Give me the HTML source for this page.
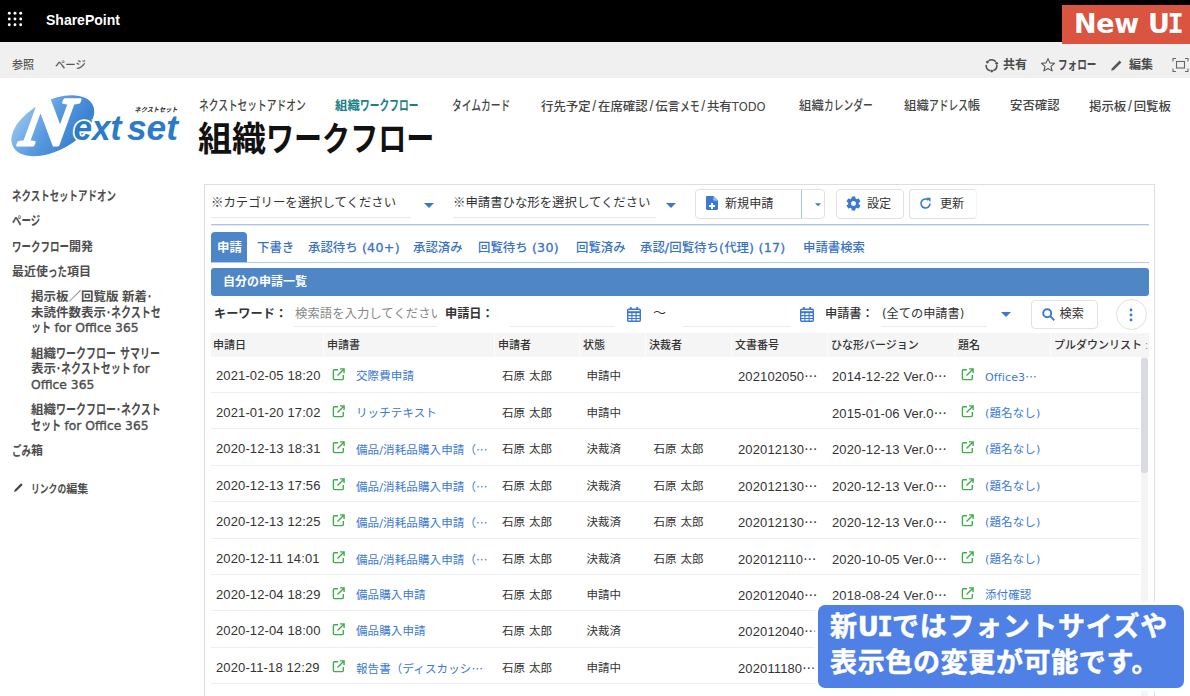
<!DOCTYPE html>
<html lang="ja">
<head>
<meta charset="utf-8">
<title>組織ワークフロー</title>
<style>
*{box-sizing:border-box;margin:0;padding:0}
html,body{width:1190px;height:696px;overflow:hidden;background:#fff}
body{position:relative;font-family:"Liberation Sans","Noto Sans CJK JP",sans-serif;color:#333;font-size:12px}
.abs{position:absolute;white-space:nowrap}
.k{display:inline-block;transform:scale(.8,1.08);transform-origin:0 55%}
.nav .k{transform:scale(.785,1.08)}
.k2{transform:scale(.79,1.08)}
#title .k{transform:scale(.825,1.0)}
#topbar{position:absolute;left:0;top:0;width:1190px;height:42px;background:#000}
#ribbon{position:absolute;left:0;top:42px;width:1190px;height:36px;background:#f0f0f0}
#badge{position:absolute;left:1062px;top:5px;width:128px;height:39px;background:#db5440;z-index:5}
#badge span{position:absolute;left:12px;top:2.5px;letter-spacing:-.3px;font-family:"DejaVu Sans","Liberation Sans",sans-serif;font-weight:bold;font-size:27px;line-height:32px;color:#fff;white-space:nowrap}
#panel{position:absolute;left:204px;top:184px;width:951px;height:530px;border:1px solid #dedede;background:#fff}
.rb{position:absolute;top:17px;font-size:12px;line-height:12px;color:#4a4a4a;font-weight:700;white-space:nowrap}
.si{font-style:normal;font-family:"DejaVu Sans Mono","Liberation Mono",monospace;margin:0 -.06em 0 -.08em}
.sl{display:inline-block;width:7.5px;text-align:center;font-size:14px;line-height:12px}
.nav{position:absolute;top:100px;font-size:12.4px;line-height:12px;color:#444;white-space:nowrap;font-weight:500}
.ln{position:absolute;left:12px;margin-top:1px;font-size:12.5px;line-height:12px;color:#4d4d4d;white-space:nowrap;font-weight:700}
.vd{font-family:"DejaVu Sans","Liberation Sans",sans-serif;font-size:11.5px}
.ln .vd{font-size:12.3px;font-weight:400;-webkit-text-stroke:.35px #4d4d4d}
.hl{position:absolute;height:1px}
.btn{position:absolute;border:1px solid #e2e2e2;border-radius:4px;background:#fff}
.p{position:absolute;white-space:nowrap;line-height:14px;font-size:12.4px;color:#333}
.b{font-weight:700}
.tab{position:absolute;top:241px;font-size:12.4px;line-height:14px;color:#3873c6;white-space:nowrap;font-weight:500}
.th{position:absolute;top:338px;font-size:11px;line-height:14px;color:#333;white-space:nowrap;font-weight:500}
.tab .wl{-webkit-text-stroke:.3px #3873c6;font-size:1.02em;letter-spacing:.3px}
.row{position:absolute;left:211px;width:929px;height:36px;border-bottom:1px solid #eeeeee}
.c{position:absolute;top:13px;line-height:14px;white-space:nowrap;font-size:13px;color:#333;letter-spacing:.12px}
.j{font-size:11.5px;top:13px;word-spacing:.8px;letter-spacing:0}
.lk{color:#3a78d4;font-size:11.5px;top:13px}
.ic{position:absolute;top:12px}
.el{font-family:"Noto Sans CJK JP","Liberation Sans",sans-serif}
.wl{font-family:"DejaVu Sans","Liberation Sans",sans-serif;font-size:.96em}
</style>
</head>
<body>
<div id="topbar">
<svg class="abs" style="left:7px;top:11px" width="16" height="16" viewBox="0 0 16 16" fill="#fff">
<circle cx="2.3" cy="2.3" r="1.450"/><circle cx="8" cy="2.3" r="1.450"/><circle cx="13.7" cy="2.3" r="1.450"/><circle cx="2.3" cy="8" r="1.450"/><circle cx="8" cy="8" r="1.450"/><circle cx="13.7" cy="8" r="1.450"/><circle cx="2.3" cy="13.7" r="1.450"/><circle cx="8" cy="13.7" r="1.450"/><circle cx="13.7" cy="13.7" r="1.450"/>
</svg>
<div class="abs" style="left:46px;top:12px;font-size:14px;line-height:16px;font-weight:bold;color:#fff">SharePoint</div>
</div>
<div id="badge"><span>New U<i class="si">I</i></span></div>
<div id="ribbon">
<div class="abs" style="left:12px;top:17px;font-size:11px;line-height:12px;color:#555;font-weight:500">参照</div>
<div class="abs" style="left:55px;top:17px;font-size:11px;line-height:12px;color:#555;font-weight:500"><span style="display:inline-block;transform:scaleX(.94);transform-origin:0 50%">ページ</span></div>
<svg class="abs" style="left:984px;top:16px" width="15" height="15" viewBox="0 0 14 14" fill="none" stroke="#555" stroke-width="1.500"><path d="M4.2 2.6A5 5 0 0 1 11 3.6M12 6.5a5 5 0 0 1-3.3 5.2M5.6 11.8A5 5 0 0 1 2.1 6.4"/><circle cx="3.2" cy="3.8" r="1.350" fill="#555" stroke="none"/><circle cx="11.8" cy="5" r="1.350" fill="#555" stroke="none"/><circle cx="7.2" cy="12.2" r="1.350" fill="#555" stroke="none"/></svg>
<div class="rb" style="left:1003px">共有</div>
<svg class="abs" style="left:1040px;top:15px" width="16" height="16" viewBox="0 0 16 16" fill="none" stroke="#555" stroke-width="1.1" stroke-linejoin="round"><path d="M8 1.6l1.9 4.3 4.6.4-3.5 3 1.1 4.6L8 11.5l-4.1 2.4L5 9.3l-3.5-3 4.6-.4z"/></svg>
<div class="rb" style="left:1058px"><span class="k" style="margin-right:-13.0px">フォロー</span></div>
<svg class="abs" style="left:1110px;top:17px" width="13" height="13" viewBox="0 0 13 13"><path d="M1.2 11.8l.8-2.6L9.6 1.6l1.8 1.8L3.8 11z" fill="#555"/></svg>
<div class="rb" style="left:1129px">編集</div>
<svg class="abs" style="left:1172px;top:15px" width="18" height="16" viewBox="0 0 18 16" fill="none" stroke="#666" stroke-width="1.1"><path d="M1 4.5V1.5H4M13 1.5h3v3M16 11.5v3h-3M4 14.5H1v-3"/><rect x="4.5" y="4.5" width="8" height="6.5"/></svg>
</div>
<svg class="abs" style="left:8px;top:90px" width="180" height="72" viewBox="0 0 180 72">
<defs><linearGradient id="lg" x1="0" y1="0" x2="1" y2="1"><stop offset="0" stop-color="#a6d0f5"/><stop offset=".45" stop-color="#5a9be0"/><stop offset=".8" stop-color="#3b80d0"/><stop offset="1" stop-color="#5d9fe2"/></linearGradient></defs>
<ellipse cx="44.800" cy="35.700" rx="45" ry="25" transform="rotate(-28 44.800 35.700)" fill="url(#lg)"/>
<text transform="translate(8.500 55) skewX(-20)" font-family="Liberation Serif,serif" font-weight="bold" font-size="69" fill="#fff" stroke="#fff" stroke-width="3" stroke-linejoin="round" textLength="48" lengthAdjust="spacingAndGlyphs">N</text>
<text x="65.500" y="50.300" font-family="Liberation Sans,sans-serif" font-style="italic" font-weight="bold" font-size="34.500" fill="#2b7bc8" stroke="#fff" stroke-width="3.500" paint-order="stroke" textLength="48" lengthAdjust="spacingAndGlyphs">ext</text>
<text x="119" y="50.300" font-family="Liberation Sans,sans-serif" font-style="italic" font-weight="bold" font-size="34.500" fill="#2b7bc8" textLength="51" lengthAdjust="spacingAndGlyphs">set</text>
<text x="126.500" y="21.500" font-family="Liberation Sans,'Noto Sans CJK JP',sans-serif" font-style="italic" font-weight="bold" font-size="6.500" fill="#222" textLength="43" lengthAdjust="spacingAndGlyphs">ネクストセット</text>
</svg>
<div class="nav" style="left:199px;"><span class="k" style="margin-right:-29.3px">ネクストセットアドオン</span></div>
<div class="nav" style="left:335px;color:#1a7f86;font-weight:700">組織<span class="k" style="margin-right:-16.0px">ワークフロー</span></div>
<div class="nav" style="left:452px;"><span class="k" style="margin-right:-16.0px">タイムカード</span></div>
<div class="nav" style="left:541px;">行先予定<span class="sl">/</span>在席確認<span class="sl">/</span>伝言<span class="k" style="margin-right:-5.3px">メモ</span><span class="sl">/</span>共有<span class="vd" style="font-size:11.5px">TODO</span></div>
<div class="nav" style="left:799px;">組織<span class="k" style="margin-right:-13.3px">カレンダー</span></div>
<div class="nav" style="left:904px;">組織<span class="k" style="margin-right:-10.7px">アドレス</span>帳</div>
<div class="nav" style="left:1010px;">安否確認</div>
<div class="nav" style="left:1089px;">掲示板<span class="sl">/</span>回覧板</div>
<div class="abs" id="title" style="left:198px;top:118px;font-size:34px;line-height:42px;color:#111;font-weight:700">組織<span class="k" style="margin-right:-35.7px">ワークフロー</span></div>
<div class="ln" style="left:12px;top:189px;font-size:12px"><span class="k k2" style="margin-right:-27.7px">ネクストセットアドオン</span></div>
<div class="ln" style="left:12px;top:214px;font-size:12px"><span class="k k2" style="margin-right:-7.6px">ページ</span></div>
<div class="ln" style="left:12px;top:240px;font-size:12px"><span class="k k2" style="margin-right:-15.1px">ワークフロー</span>開発</div>
<div class="ln" style="left:12px;top:265px;font-size:12px">最近使<span class="k k2" style="margin-right:-5.0px">った</span>項目</div>
<div class="ln" style="left:31px;top:290px">掲示板／回覧版 新着<span class="k" style="margin-right:-2.5px">･</span></div>
<div class="ln" style="left:31px;top:306px">未読件数表示<span class="k" style="margin-right:-15.0px">･ネクストセ</span></div>
<div class="ln" style="left:31px;top:321px"><span class="k" style="margin-right:-5.0px">ット</span> <span class="vd">for Office 365</span></div>
<div class="ln" style="left:31px;top:347px">組織<span class="k" style="margin-right:-15.0px">ワークフロー</span> <span class="k" style="margin-right:-10.0px">サマリー</span></div>
<div class="ln" style="left:31px;top:362px">表示<span class="k" style="margin-right:-20.0px">･ネクストセット</span> <span class="vd">for</span></div>
<div class="ln" style="left:31px;top:378px"><span class="vd">Office 365</span></div>
<div class="ln" style="left:31px;top:403px">組織<span class="k" style="margin-right:-27.5px">ワークフロー･ネクスト</span></div>
<div class="ln" style="left:31px;top:419px"><span class="k" style="margin-right:-7.5px">セット</span> <span class="vd">for Office 365</span></div>
<div class="ln" style="left:12px;top:444px;font-size:12px"><span class="k k2" style="margin-right:-5.0px">ごみ</span>箱</div>
<svg class="abs" style="left:13px;top:482px" width="11" height="11" viewBox="0 0 13 13"><path d="M1.2 11.8l.8-2.6L9.6 1.6l1.8 1.8L3.8 11z" fill="#444"/></svg>
<div class="ln" style="left:31px;top:482px;font-size:11px"><span class="k" style="margin-right:-8.8px">リンクの</span>編集</div>
<div id="panel"></div>
<div class="p" style="left:211px;top:196px">※カテゴリーを選択してください</div>
<div class="hl" style="left:211px;top:217px;width:200px;background:#ebebeb"></div>
<svg class="abs" style="left:424px;top:203px" width="10" height="5" viewBox="0 0 10 5"><path d="M0 0h10L5 5z" fill="#3a78d4"/></svg>
<div class="p" style="left:453px;top:196px">※申請書ひな形を選択してください</div>
<div class="hl" style="left:453px;top:217px;width:203px;background:#ebebeb"></div>
<svg class="abs" style="left:666px;top:203px" width="10" height="5" viewBox="0 0 10 5"><path d="M0 0h10L5 5z" fill="#3a78d4"/></svg>
<div class="btn" style="left:695px;top:189px;width:130px;height:30px"></div>
<div class="abs" style="left:801px;top:190px;width:1px;height:28px;background:#a9c4e8"></div>
<svg class="abs" style="left:706px;top:196px" width="12" height="14" viewBox="0 0 12 14"><path d="M1.2 0h6.3L12 4.5v8.3c0 .7-.5 1.2-1.2 1.2H1.2C.5 14 0 13.500 0 12.800V1.200C0 .5.5 0 1.200 0z" fill="#3a78d4"/><path d="M7.300 0v3.700c0 .6.400 1 1 1H12z" fill="#9dbdec"/><path d="M5 7h2v2h2v2H7v2H5v-2H3V9h2z" fill="#fff"/></svg>
<div class="p" style="left:725px;top:197px;font-size:12.1px">新規申請</div>
<svg class="abs" style="left:814.5px;top:203px" width="6" height="3.5" viewBox="0 0 10 5"><path d="M0 0h10L5 5z" fill="#3a78d4"/></svg>
<div class="btn" style="left:836px;top:189px;width:68px;height:30px"></div>
<svg class="abs" style="left:844.5px;top:194.500px" width="17" height="17" viewBox="0 0 24 24"><path fill="#3a78d4" d="M19.430 12.980c.040-.320.070-.640.070-.980s-.030-.660-.070-.980l2.110-1.650c.190-.150.240-.420.120-.640l-2-3.460c-.120-.220-.390-.300-.610-.220l-2.490 1c-.520-.400-1.080-.730-1.690-.980l-.380-2.650C14.460 2.180 14.250 2 14 2h-4c-.250 0-.460.180-.490.420l-.380 2.650c-.610.250-1.170.590-1.690.980l-2.490-1c-.230-.090-.490 0-.610.220l-2 3.460c-.130.220-.070.490.120.640l2.110 1.650c-.040.320-.070.650-.070.980s.030.660.070.980l-2.110 1.650c-.190.150-.240.420-.120.640l2 3.460c.120.220.390.300.610.220l2.490-1c.520.400 1.080.730 1.690.980l.380 2.650c.030.240.240.420.490.420h4c.250 0 .460-.180.490-.420l.380-2.650c.610-.250 1.170-.590 1.690-.980l2.490 1c.230.090.490 0 .610-.220l2-3.460c.120-.220.070-.490-.120-.640l-2.110-1.650zM12 15.500c-1.930 0-3.500-1.570-3.500-3.500s1.570-3.500 3.500-3.500 3.500 1.570 3.500 3.500-1.570 3.500-3.500 3.500z"/></svg>
<div class="p" style="left:867px;top:197px;font-size:12.1px">設定</div>
<div class="btn" style="left:909px;top:189px;width:68px;height:30px;border-right-color:#f4f4f4"></div>
<svg class="abs" style="left:919px;top:197px" width="13" height="13" viewBox="0 0 13 13" fill="none" stroke="#3a78d4" stroke-width="1.600"><path d="M11 6.500A4.500 4.500 0 1 1 9.400 3.050"/><path d="M7.300 .8h4.200v4.200z" fill="#3a78d4" stroke="none"/></svg>
<div class="p" style="left:940px;top:197px;font-size:12.1px">更新</div>
<div class="hl" style="left:211px;top:224px;width:938px;background:#a9c5eb"></div>
<div class="hl" style="left:211px;top:225px;width:938px;background:#dfe9f8"></div>
<div class="abs" style="left:211px;top:232px;width:36px;height:31px;background:#4d86c8;border-radius:4px 4px 0 0"></div>
<div class="tab" style="left:217px;color:#fff;font-weight:700">申請</div>
<div class="tab" style="left:257px">下書き</div>
<div class="tab" style="left:308px">承認待ち<span class="wl"> (40+)</span></div>
<div class="tab" style="left:413px">承認済み</div>
<div class="tab" style="left:478px">回覧待ち<span class="wl"> (30)</span></div>
<div class="tab" style="left:576px">回覧済み</div>
<div class="tab" style="left:640px">承認<span class="wl">/</span>回覧待ち<span class="wl">(</span>代理<span class="wl">) (17)</span></div>
<div class="tab" style="left:803px">申請書検索</div>
<div class="hl" style="left:211px;top:262px;width:938px;background:#b3cbee"></div>
<div class="abs" style="left:211px;top:268px;width:938px;height:28px;background:#4f86c6;border-radius:3px"></div>
<div class="p b" style="left:223px;top:275px;color:#fff;font-size:12px">自分の申請一覧</div>
<div class="p b" style="left:214px;top:307px;font-size:12.2px">キーワード：</div>
<div class="p" style="left:295px;top:307px;color:#888;width:142px;overflow:hidden">検索語を入力してください</div>
<div class="hl" style="left:294px;top:326px;width:143px;background:#ececec"></div>
<div class="p b" style="left:445px;top:307px;font-size:12.2px">申請日：</div>
<div class="hl" style="left:510px;top:326px;width:105px;background:#ececec"></div>
<svg class="abs" style="left:627px;top:307px" width="14" height="15" viewBox="0 0 14 15" fill="none" stroke="#3a78d4"><path d="M3.800 0v3M10.200 0v3" stroke-width="1.800"/><rect x=".7" y="2.200" width="12.600" height="12.100" rx="1" stroke-width="1.400"/><path d="M.7 5.200h12.600" stroke-width="2"/><path d="M4.900 5.500v8.800M9.100 5.500v8.800M.7 8.600h12.600M.7 11.500h12.600" stroke-width="1.100"/></svg>
<div class="p" style="left:653px;top:306px;font-size:13px">～</div>
<div class="hl" style="left:683px;top:326px;width:108px;background:#ececec"></div>
<svg class="abs" style="left:800px;top:307px" width="14" height="15" viewBox="0 0 14 15" fill="none" stroke="#3a78d4"><path d="M3.800 0v3M10.200 0v3" stroke-width="1.800"/><rect x=".7" y="2.200" width="12.600" height="12.100" rx="1" stroke-width="1.400"/><path d="M.7 5.200h12.600" stroke-width="2"/><path d="M4.900 5.500v8.800M9.100 5.500v8.800M.7 8.600h12.600M.7 11.500h12.600" stroke-width="1.100"/></svg>
<div class="p" style="left:825px;top:307px;font-size:12.2px;font-weight:500">申請書：</div>
<div class="p" style="left:882px;top:307px;font-size:12.2px"><span class="wl">(</span>全ての申請書<span class="wl">)</span></div>
<div class="hl" style="left:881px;top:326px;width:106px;background:#ececec"></div>
<svg class="abs" style="left:1001px;top:312px" width="10" height="5" viewBox="0 0 10 5"><path d="M0 0h10L5 5z" fill="#3a78d4"/></svg>
<div class="btn" style="left:1031px;top:300px;width:67px;height:29px"></div>
<svg class="abs" style="left:1042px;top:308px" width="13" height="13" viewBox="0 0 13 13" fill="none" stroke="#3a78d4" stroke-width="1.900"><circle cx="5.200" cy="5.200" r="4"/><path d="M8.200 8.200L12.300 12.300"/></svg>
<div class="p" style="left:1059.5px;top:307px;font-size:12.2px">検索</div>
<div class="abs" style="left:1116px;top:299px;width:31px;height:31px;border:1px solid #e0e0e0;border-radius:50%"></div>
<svg class="abs" style="left:1129px;top:308px" width="4" height="14" viewBox="0 0 4 14" fill="#3a78d4"><circle cx="2" cy="2" r="1.400"/><circle cx="2" cy="7" r="1.400"/><circle cx="2" cy="12" r="1.400"/></svg>
<div class="abs" style="left:211px;top:333px;width:938px;height:24px;background:#f5f5f5"></div>
<div class="th" style="left:213px">申請日</div>
<div class="th" style="left:327px">申請書</div>
<div class="th" style="left:498px">申請者</div>
<div class="th" style="left:583px">状態</div>
<div class="th" style="left:649px">決裁者</div>
<div class="th" style="left:735px">文書番号</div>
<div class="th" style="left:831px">ひな形バージョン</div>
<div class="th" style="left:958px">題名</div>
<div class="th" style="left:1054px">プルダウンリスト</div>
<div class="abs" style="left:323px;top:333px;width:1px;height:24px;background:rgba(255,255,255,.7)"></div>
<div class="abs" style="left:494px;top:333px;width:1px;height:24px;background:rgba(255,255,255,.7)"></div>
<div class="abs" style="left:579px;top:333px;width:1px;height:24px;background:rgba(255,255,255,.7)"></div>
<div class="abs" style="left:645px;top:333px;width:1px;height:24px;background:rgba(255,255,255,.7)"></div>
<div class="abs" style="left:731px;top:333px;width:1px;height:24px;background:rgba(255,255,255,.7)"></div>
<div class="abs" style="left:827px;top:333px;width:1px;height:24px;background:rgba(255,255,255,.7)"></div>
<div class="abs" style="left:954px;top:333px;width:1px;height:24px;background:rgba(255,255,255,.7)"></div>
<div class="abs" style="left:1050px;top:333px;width:1px;height:24px;background:rgba(255,255,255,.7)"></div>
<div class="abs" style="left:1145px;top:338px;font-size:11px;line-height:14px;color:#888">:</div>
<div class="row" style="top:356px;height:37px">
<div class="c" style="left:5px">2021-02-05 18:20</div>
<svg class="ic" style="left:121px" width="13" height="13" viewBox="0 0 13 13" fill="none" stroke="#3fae49" stroke-width="1.400"><path d="M6 1.700H2.400c-.6 0-1 .4-1 1v7.900c0 .6.400 1 1 1h7.900c.6 0 1-.4 1-1V7"/><path d="M5.500 7.500L11.800 1.200M8 .9h4.100V5" /></svg>
<div class="c lk" style="left:145px">交際費申請</div>
<div class="c j" style="left:291px">石原 太郎</div>
<div class="c j" style="left:375.5px">申請中</div>
<div class="c" style="left:527px">202102050<span class="el">…</span></div>
<div class="c" style="left:621px">2014-12-22 Ver.0<span class="el">…</span></div>
<svg class="ic" style="left:750px" width="13" height="13" viewBox="0 0 13 13" fill="none" stroke="#3fae49" stroke-width="1.400"><path d="M6 1.700H2.400c-.6 0-1 .4-1 1v7.900c0 .6.400 1 1 1h7.900c.6 0 1-.4 1-1V7"/><path d="M5.500 7.500L11.800 1.200M8 .9h4.100V5" /></svg>
<div class="c lk" style="left:774px"><span class="wl">Office3</span><span class="el">…</span></div>
</div>
<div class="row" style="top:393px;height:36px">
<div class="c" style="left:5px">2021-01-20 17:02</div>
<svg class="ic" style="left:121px" width="13" height="13" viewBox="0 0 13 13" fill="none" stroke="#3fae49" stroke-width="1.400"><path d="M6 1.700H2.400c-.6 0-1 .4-1 1v7.900c0 .6.400 1 1 1h7.900c.6 0 1-.4 1-1V7"/><path d="M5.500 7.500L11.800 1.200M8 .9h4.100V5" /></svg>
<div class="c lk" style="left:145px">リッチテキスト</div>
<div class="c j" style="left:291px">石原 太郎</div>
<div class="c j" style="left:375.5px">申請中</div>
<div class="c" style="left:621px">2015-01-06 Ver.0<span class="el">…</span></div>
<svg class="ic" style="left:750px" width="13" height="13" viewBox="0 0 13 13" fill="none" stroke="#3fae49" stroke-width="1.400"><path d="M6 1.700H2.400c-.6 0-1 .4-1 1v7.900c0 .6.400 1 1 1h7.900c.6 0 1-.4 1-1V7"/><path d="M5.500 7.500L11.800 1.200M8 .9h4.100V5" /></svg>
<div class="c lk" style="left:774px"><span class="wl">(</span>題名なし<span class="wl">)</span></div>
</div>
<div class="row" style="top:429px;height:37px">
<div class="c" style="left:5px">2020-12-13 18:31</div>
<svg class="ic" style="left:121px" width="13" height="13" viewBox="0 0 13 13" fill="none" stroke="#3fae49" stroke-width="1.400"><path d="M6 1.700H2.400c-.6 0-1 .4-1 1v7.900c0 .6.400 1 1 1h7.900c.6 0 1-.4 1-1V7"/><path d="M5.500 7.500L11.800 1.200M8 .9h4.100V5" /></svg>
<div class="c lk" style="left:145px">備品<span class="wl">/</span>消耗品購入申請（<span class="el">…</span></div>
<div class="c j" style="left:291px">石原 太郎</div>
<div class="c j" style="left:375.5px">決裁済</div>
<div class="c j" style="left:442.5px">石原 太郎</div>
<div class="c" style="left:527px">202012130<span class="el">…</span></div>
<div class="c" style="left:621px">2020-12-13 Ver.0<span class="el">…</span></div>
<svg class="ic" style="left:750px" width="13" height="13" viewBox="0 0 13 13" fill="none" stroke="#3fae49" stroke-width="1.400"><path d="M6 1.700H2.400c-.6 0-1 .4-1 1v7.900c0 .6.400 1 1 1h7.900c.6 0 1-.4 1-1V7"/><path d="M5.500 7.500L11.800 1.200M8 .9h4.100V5" /></svg>
<div class="c lk" style="left:774px"><span class="wl">(</span>題名なし<span class="wl">)</span></div>
</div>
<div class="row" style="top:466px;height:36px">
<div class="c" style="left:5px">2020-12-13 17:56</div>
<svg class="ic" style="left:121px" width="13" height="13" viewBox="0 0 13 13" fill="none" stroke="#3fae49" stroke-width="1.400"><path d="M6 1.700H2.400c-.6 0-1 .4-1 1v7.900c0 .6.400 1 1 1h7.900c.6 0 1-.4 1-1V7"/><path d="M5.500 7.500L11.800 1.200M8 .9h4.100V5" /></svg>
<div class="c lk" style="left:145px">備品<span class="wl">/</span>消耗品購入申請（<span class="el">…</span></div>
<div class="c j" style="left:291px">石原 太郎</div>
<div class="c j" style="left:375.5px">決裁済</div>
<div class="c j" style="left:442.5px">石原 太郎</div>
<div class="c" style="left:527px">202012130<span class="el">…</span></div>
<div class="c" style="left:621px">2020-12-13 Ver.0<span class="el">…</span></div>
<svg class="ic" style="left:750px" width="13" height="13" viewBox="0 0 13 13" fill="none" stroke="#3fae49" stroke-width="1.400"><path d="M6 1.700H2.400c-.6 0-1 .4-1 1v7.900c0 .6.400 1 1 1h7.900c.6 0 1-.4 1-1V7"/><path d="M5.500 7.500L11.800 1.200M8 .9h4.100V5" /></svg>
<div class="c lk" style="left:774px"><span class="wl">(</span>題名なし<span class="wl">)</span></div>
</div>
<div class="row" style="top:502px;height:37px">
<div class="c" style="left:5px">2020-12-13 12:25</div>
<svg class="ic" style="left:121px" width="13" height="13" viewBox="0 0 13 13" fill="none" stroke="#3fae49" stroke-width="1.400"><path d="M6 1.700H2.400c-.6 0-1 .4-1 1v7.900c0 .6.400 1 1 1h7.900c.6 0 1-.4 1-1V7"/><path d="M5.500 7.500L11.800 1.200M8 .9h4.100V5" /></svg>
<div class="c lk" style="left:145px">備品<span class="wl">/</span>消耗品購入申請（<span class="el">…</span></div>
<div class="c j" style="left:291px">石原 太郎</div>
<div class="c j" style="left:375.5px">決裁済</div>
<div class="c j" style="left:442.5px">石原 太郎</div>
<div class="c" style="left:527px">202012130<span class="el">…</span></div>
<div class="c" style="left:621px">2020-12-13 Ver.0<span class="el">…</span></div>
<svg class="ic" style="left:750px" width="13" height="13" viewBox="0 0 13 13" fill="none" stroke="#3fae49" stroke-width="1.400"><path d="M6 1.700H2.400c-.6 0-1 .4-1 1v7.900c0 .6.400 1 1 1h7.900c.6 0 1-.4 1-1V7"/><path d="M5.500 7.500L11.800 1.200M8 .9h4.100V5" /></svg>
<div class="c lk" style="left:774px"><span class="wl">(</span>題名なし<span class="wl">)</span></div>
</div>
<div class="row" style="top:539px;height:36px">
<div class="c" style="left:5px">2020-12-11 14:01</div>
<svg class="ic" style="left:121px" width="13" height="13" viewBox="0 0 13 13" fill="none" stroke="#3fae49" stroke-width="1.400"><path d="M6 1.700H2.400c-.6 0-1 .4-1 1v7.900c0 .6.400 1 1 1h7.900c.6 0 1-.4 1-1V7"/><path d="M5.500 7.500L11.800 1.200M8 .9h4.100V5" /></svg>
<div class="c lk" style="left:145px">備品<span class="wl">/</span>消耗品購入申請（<span class="el">…</span></div>
<div class="c j" style="left:291px">石原 太郎</div>
<div class="c j" style="left:375.5px">決裁済</div>
<div class="c j" style="left:442.5px">石原 太郎</div>
<div class="c" style="left:527px">202012110<span class="el">…</span></div>
<div class="c" style="left:621px">2020-10-05 Ver.0<span class="el">…</span></div>
<svg class="ic" style="left:750px" width="13" height="13" viewBox="0 0 13 13" fill="none" stroke="#3fae49" stroke-width="1.400"><path d="M6 1.700H2.400c-.6 0-1 .4-1 1v7.900c0 .6.400 1 1 1h7.900c.6 0 1-.4 1-1V7"/><path d="M5.500 7.500L11.800 1.200M8 .9h4.100V5" /></svg>
<div class="c lk" style="left:774px"><span class="wl">(</span>題名なし<span class="wl">)</span></div>
</div>
<div class="row" style="top:575px;height:36px">
<div class="c" style="left:5px">2020-12-04 18:29</div>
<svg class="ic" style="left:121px" width="13" height="13" viewBox="0 0 13 13" fill="none" stroke="#3fae49" stroke-width="1.400"><path d="M6 1.700H2.400c-.6 0-1 .4-1 1v7.900c0 .6.400 1 1 1h7.900c.6 0 1-.4 1-1V7"/><path d="M5.500 7.500L11.800 1.200M8 .9h4.100V5" /></svg>
<div class="c lk" style="left:145px">備品購入申請</div>
<div class="c j" style="left:291px">石原 太郎</div>
<div class="c j" style="left:375.5px">申請中</div>
<div class="c" style="left:527px">202012040<span class="el">…</span></div>
<div class="c" style="left:621px">2018-08-24 Ver.0<span class="el">…</span></div>
<svg class="ic" style="left:750px" width="13" height="13" viewBox="0 0 13 13" fill="none" stroke="#3fae49" stroke-width="1.400"><path d="M6 1.700H2.400c-.6 0-1 .4-1 1v7.900c0 .6.400 1 1 1h7.900c.6 0 1-.4 1-1V7"/><path d="M5.500 7.500L11.800 1.200M8 .9h4.100V5" /></svg>
<div class="c lk" style="left:774px">添付確認</div>
</div>
<div class="row" style="top:611px;height:37px">
<div class="c" style="left:5px">2020-12-04 18:00</div>
<svg class="ic" style="left:121px" width="13" height="13" viewBox="0 0 13 13" fill="none" stroke="#3fae49" stroke-width="1.400"><path d="M6 1.700H2.400c-.6 0-1 .4-1 1v7.900c0 .6.400 1 1 1h7.900c.6 0 1-.4 1-1V7"/><path d="M5.500 7.500L11.800 1.200M8 .9h4.100V5" /></svg>
<div class="c lk" style="left:145px">備品購入申請</div>
<div class="c j" style="left:291px">石原 太郎</div>
<div class="c j" style="left:375.5px">決裁済</div>
<div class="c" style="left:527px">202012040<span class="el">…</span></div>
<svg class="ic" style="left:750px" width="13" height="13" viewBox="0 0 13 13" fill="none" stroke="#3fae49" stroke-width="1.400"><path d="M6 1.700H2.400c-.6 0-1 .4-1 1v7.900c0 .6.400 1 1 1h7.900c.6 0 1-.4 1-1V7"/><path d="M5.500 7.500L11.800 1.200M8 .9h4.100V5" /></svg>
<div class="c lk" style="left:774px"><span class="wl">(</span>題名なし<span class="wl">)</span></div>
</div>
<div class="row" style="top:648px;height:36px">
<div class="c" style="left:5px">2020-11-18 12:29</div>
<svg class="ic" style="left:121px" width="13" height="13" viewBox="0 0 13 13" fill="none" stroke="#3fae49" stroke-width="1.400"><path d="M6 1.700H2.400c-.6 0-1 .4-1 1v7.900c0 .6.400 1 1 1h7.900c.6 0 1-.4 1-1V7"/><path d="M5.500 7.500L11.800 1.200M8 .9h4.100V5" /></svg>
<div class="c lk" style="left:145px">報告書（ディスカッシ<span class="el">…</span></div>
<div class="c j" style="left:291px">石原 太郎</div>
<div class="c j" style="left:375.5px">申請中</div>
<div class="c" style="left:527px">202011180<span class="el">…</span></div>
<svg class="ic" style="left:750px" width="13" height="13" viewBox="0 0 13 13" fill="none" stroke="#3fae49" stroke-width="1.400"><path d="M6 1.700H2.400c-.6 0-1 .4-1 1v7.900c0 .6.400 1 1 1h7.900c.6 0 1-.4 1-1V7"/><path d="M5.500 7.500L11.800 1.200M8 .9h4.100V5" /></svg>
<div class="c lk" style="left:774px"><span class="wl">(</span>題名なし<span class="wl">)</span></div>
</div>
<div class="row" style="top:684px;height:37px">
<div class="c" style="left:5px">2020-11-18 12:20</div>
<svg class="ic" style="left:121px" width="13" height="13" viewBox="0 0 13 13" fill="none" stroke="#3fae49" stroke-width="1.400"><path d="M6 1.700H2.400c-.6 0-1 .4-1 1v7.900c0 .6.400 1 1 1h7.900c.6 0 1-.4 1-1V7"/><path d="M5.500 7.500L11.800 1.200M8 .9h4.100V5" /></svg>
<div class="c lk" style="left:145px">報告書</div>
<div class="c j" style="left:291px">石原 太郎</div>
<div class="c j" style="left:375.5px">申請中</div>
<div class="c" style="left:527px">202011180<span class="el">…</span></div>
<svg class="ic" style="left:750px" width="13" height="13" viewBox="0 0 13 13" fill="none" stroke="#3fae49" stroke-width="1.400"><path d="M6 1.700H2.400c-.6 0-1 .4-1 1v7.900c0 .6.400 1 1 1h7.900c.6 0 1-.4 1-1V7"/><path d="M5.500 7.500L11.800 1.200M8 .9h4.100V5" /></svg>
<div class="c lk" style="left:774px"><span class="wl">(</span>題名なし<span class="wl">)</span></div>
</div>
<div class="abs" style="left:1141px;top:357px;width:7px;height:340px;background:#f4f4f4"></div>
<div class="abs" style="left:1141px;top:358px;width:7px;height:115px;background:#d9dbe0;border-radius:3px"></div>
<div class="abs" style="left:818px;top:605px;width:366px;height:83px;background:#4f80e6;border-radius:7px;box-shadow:0 0 0 3px rgba(255,255,255,.85),0 0 6px 3px rgba(255,255,255,.7)"></div>
<div class="abs" style="left:830px;top:609px;font-size:27px;line-height:36px;font-weight:700;color:#fff;letter-spacing:.65px;-webkit-text-stroke:.5px #fff">新<span style="font-family:'DejaVu Sans',sans-serif;font-size:26px">U<i class="si">I</i></span>ではフォントサイズや</div>
<div class="abs" style="left:830px;top:645px;font-size:27px;line-height:36px;font-weight:700;color:#fff;letter-spacing:.65px;-webkit-text-stroke:.5px #fff">表示色の変更が可能です。</div>
</body>
</html>
